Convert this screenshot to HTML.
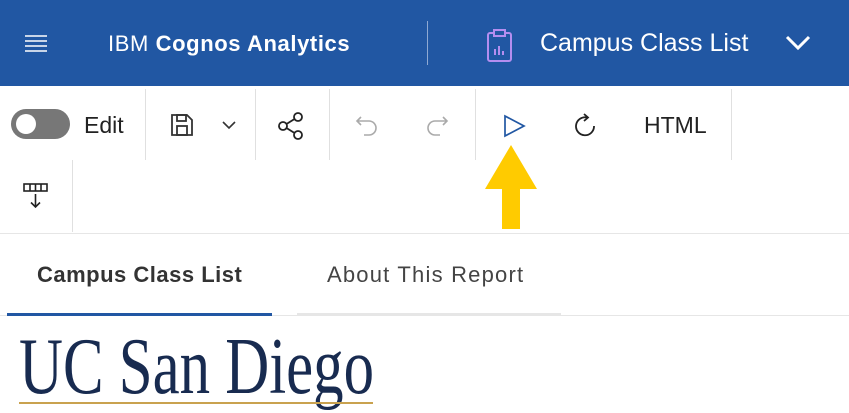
<!DOCTYPE html>
<html><head><style>
*{margin:0;padding:0;box-sizing:border-box}
body{width:849px;height:413px;overflow:hidden;background:#fff;font-family:"Liberation Sans",sans-serif;position:relative}
.hdr{position:absolute;left:0;top:0;width:849px;height:86px;background:#2157a3;color:#fff}
.abs{position:absolute;white-space:nowrap}
.sep{position:absolute;width:1px;background:#e0e0e0}
</style></head><body>
<div class="hdr">
 <svg class="abs" style="left:25px;top:34px" width="22" height="18"><g stroke="#fff" stroke-width="1.6"><line x1="0" y1="2" x2="22" y2="2"/><line x1="0" y1="7" x2="22" y2="7"/><line x1="0" y1="12" x2="22" y2="12"/><line x1="0" y1="17" x2="22" y2="17"/></g></svg>
 <div class="abs" style="left:108px;top:31px;font-size:22px;letter-spacing:0.6px">IBM <b>Cognos Analytics</b></div>
 <div class="abs" style="left:427px;top:21px;width:1px;height:44px;background:#8fa9d3"></div>
 <svg class="abs" style="left:486px;top:29px" width="30" height="34"><g fill="none" stroke="#b48ef0" stroke-width="2"><rect x="2" y="4" width="23" height="28" rx="2"/><rect x="8" y="1" width="11" height="6" fill="#2157a3"/><line x1="9" y1="26" x2="9" y2="20"/><line x1="13" y1="26" x2="13" y2="17"/><line x1="17" y1="26" x2="17" y2="22"/></g></svg>
 <div class="abs" style="left:540px;top:29px;font-size:25px">Campus Class List</div>
 <svg class="abs" style="left:785px;top:34px" width="26" height="18"><path d="M2 3 L13 14 L24 3" fill="none" stroke="#fff" stroke-width="3"/></svg>
</div>
<div class="abs" style="left:11px;top:109px;width:59px;height:30px;border-radius:15px;background:#777"></div>
<div class="abs" style="left:16px;top:114px;width:20px;height:20px;border-radius:10px;background:#fff"></div>
<div class="abs" style="left:84px;top:112px;font-size:23px;color:#222">Edit</div>
<div class="sep" style="left:145px;top:89px;height:71px"></div>
<svg class="abs" style="left:170px;top:113px" width="24" height="24"><g fill="none" stroke="#333" stroke-width="1.8"><path d="M2 2 H17 L22 7 V22 H2 Z"/><rect x="7" y="2" width="9" height="6"/><rect x="7" y="13" width="10" height="9"/></g></svg>
<svg class="abs" style="left:221px;top:120px" width="16" height="10"><path d="M2 2 L8 8 L14 2" fill="none" stroke="#333" stroke-width="1.6"/></svg>
<div class="sep" style="left:255px;top:89px;height:71px"></div>
<svg class="abs" style="left:277px;top:112px" width="28" height="28"><g fill="none" stroke="#222" stroke-width="1.8"><circle cx="6" cy="14" r="4"/><circle cx="21" cy="5" r="4"/><circle cx="21" cy="23" r="4"/><line x1="9.5" y1="12" x2="17.5" y2="7"/><line x1="9.5" y1="16" x2="17.5" y2="21"/></g></svg>
<div class="sep" style="left:329px;top:89px;height:71px"></div>
<svg class="abs" style="left:355px;top:114px" width="24" height="24"><path d="M6 3 L2 7 L6 11 M2 7 H14 A7 7 0 0 1 14 21 H9" fill="none" stroke="#aaa" stroke-width="1.6"/></svg>
<svg class="abs" style="left:425px;top:114px" width="24" height="24"><path d="M18 3 L22 7 L18 11 M22 7 H10 A7 7 0 0 0 10 21 H15" fill="none" stroke="#aaa" stroke-width="1.6"/></svg>
<div class="sep" style="left:475px;top:89px;height:71px"></div>
<svg class="abs" style="left:502px;top:114px" width="24" height="24"><path d="M3 2 L22 12 L3 22 Z" fill="none" stroke="#2157a3" stroke-width="1.7"/></svg>
<svg class="abs" style="left:572px;top:112px" width="28" height="28"><path d="M22 14 A9 9 0 1 1 15 5.5 M12 2 L16 5.5 L12 9" fill="none" stroke="#222" stroke-width="1.8"/></svg>
<div class="abs" style="left:644px;top:112px;font-size:23px;color:#222">HTML</div>
<div class="sep" style="left:731px;top:89px;height:71px"></div>
<svg class="abs" style="left:23px;top:183px" width="26" height="28"><g fill="none" stroke="#222" stroke-width="1.6"><rect x="1" y="1" width="23" height="7"/><line x1="7" y1="1" x2="7" y2="8"/><line x1="12.5" y1="1" x2="12.5" y2="8"/><line x1="18" y1="1" x2="18" y2="8"/><path d="M12.5 11 V24 M8 19.5 L12.5 24 L17 19.5"/></g></svg>
<div class="sep" style="left:72px;top:160px;height:72px"></div>
<svg class="abs" style="left:483px;top:145px" width="56" height="85"><path d="M28 0 L54 44 H37 V84 H19 V44 H2 Z" fill="#ffcb00"/></svg>
<div class="abs" style="left:0;top:233px;width:849px;height:1px;background:#e6e6e6"></div>
<div class="abs" style="left:37px;top:262px;font-size:22px;font-weight:bold;color:#333;letter-spacing:0.5px">Campus Class List</div>
<div class="abs" style="left:327px;top:262px;font-size:22px;color:#444;letter-spacing:1.2px">About This Report</div>
<div class="abs" style="left:0;top:315px;width:849px;height:1px;background:#e6e6e6"></div>
<div class="abs" style="left:7px;top:313px;width:265px;height:3px;background:#2157a3"></div>
<div class="abs" style="left:297px;top:313px;width:264px;height:3px;background:#e6e6e6"></div>
<svg class="abs" style="left:0;top:320px" width="400" height="93"><text x="19" y="73" font-family="Liberation Serif,serif" font-size="80" fill="#182b50" textLength="355" lengthAdjust="spacingAndGlyphs">UC San Diego</text><line x1="19" y1="83" x2="373" y2="83" stroke="#c9a24f" stroke-width="2"/></svg>
</body></html>
